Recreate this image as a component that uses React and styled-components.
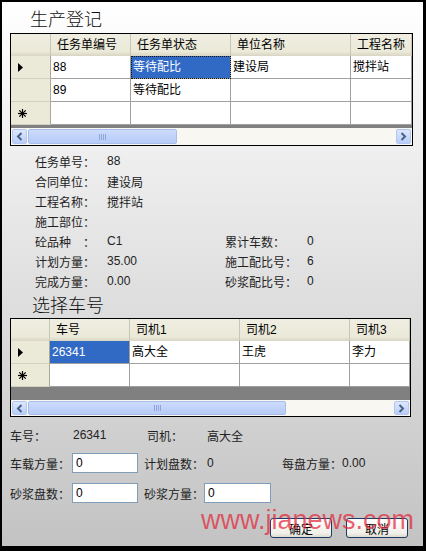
import styled, { createGlobalStyle } from "styled-components";

const Global = createGlobalStyle`
  body {
    margin: 0;
    font-family: "Liberation Sans", "Noto Sans CJK SC", sans-serif;
    font-size: 12px;
    color: #111;
  }
`;

const Window = styled.div`
  position: relative;
  width: 426px;
  height: 551px;
  box-sizing: border-box;
  border-style: solid;
  border-color: #000;
  border-width: 2px 3px 5px 2px;
  background: linear-gradient(#ffffff, #c3c3c3);
  padding: 0 10px 0 8px;
  display: flex;
  flex-direction: column;
  overflow: hidden;
`;

const Title = styled.div`
  font-family: "Noto Sans CJK SC", sans-serif;
  font-size: 18px;
  font-weight: 300;
  line-height: 24px;
  padding-left: ${(p) => p.$indent}px;
  margin-top: ${(p) => p.$mt}px;
  color: #111;
`;

const GridFrame = styled.div`
  width: ${(p) => p.$w}px;
  box-sizing: border-box;
  border: 1px solid #000;
  background: #808080;
  margin-top: ${(p) => p.$mt}px;
  overflow: hidden;
`;

const GridRow = styled.div`
  display: grid;
  grid-template-columns: ${(p) => p.$cols};
`;

const HeadCell = styled.div`
  height: 22px;
  box-sizing: border-box;
  background: linear-gradient(#efeee2 0%, #ebe9d8 80%, #d8d5c4 100%);
  border-right: 1px solid #c9c6b5;
  padding-left: 6px;
  line-height: 22px;
  white-space: nowrap;
  overflow: hidden;
  color: #000;
`;

const RowHead = styled.div`
  height: 23px;
  box-sizing: border-box;
  background: #ebe9d8;
  border-right: 1px solid #aca899;
  border-bottom: 1px solid #d4d0c0;
  display: flex;
  align-items: center;
  padding-left: 7px;
`;

const Cell = styled.div`
  height: 23px;
  box-sizing: border-box;
  background: ${(p) => (p.$sel ? "#316ac5" : "#fff")};
  color: ${(p) => (p.$sel ? "#fff" : "#000")};
  border-right: 1px solid #a0a0a0;
  border-bottom: 1px solid #a0a0a0;
  padding-left: 2px;
  line-height: 22px;
  white-space: nowrap;
  overflow: hidden;
  outline: ${(p) => (p.$focus ? "1px dotted #111" : "none")};
  outline-offset: -1px;
`;

const Band = styled.div`
  height: ${(p) => p.$h}px;
  background: #808080;
`;

const ScrollBar = styled.div`
  height: ${(p) => p.$h}px;
  background: #f8f7f2;
  display: flex;
  align-items: center;
  padding: 0 1px;
  box-sizing: border-box;
`;

const ArrowBtn = styled.div`
  width: 15px;
  height: ${(p) => p.$h - 2}px;
  box-sizing: border-box;
  border: 1px solid #b2c6f2;
  border-radius: 2px;
  background: linear-gradient(#dde7fe, #b9cdf9);
  display: flex;
  align-items: center;
  justify-content: center;
  margin-left: ${(p) => (p.$right ? "auto" : "0")};
`;

const Thumb = styled.div`
  margin-left: ${(p) => p.$ml}px;
  width: ${(p) => p.$w}px;
  height: ${(p) => p.$h - 2}px;
  box-sizing: border-box;
  border: 1px solid #a7bdea;
  border-radius: 2px;
  background: linear-gradient(#cddbfc, #b6cbf7);
  display: flex;
  align-items: center;
  justify-content: center;
  gap: 1px;
`;

const Grip = styled.span`
  width: 1px;
  height: 6px;
  background: #8ea7da;
`;

const Chevron = ({ right }) => (
  <svg width="7" height="9" viewBox="0 0 7 9">
    <path
      d={right ? "M1.5 1 L5 4.5 L1.5 8" : "M5.5 1 L2 4.5 L5.5 8"}
      fill="none"
      stroke="#4d6185"
      strokeWidth="2"
    />
  </svg>
);

const CurrentMark = () => (
  <svg width="5" height="9" viewBox="0 0 5 9">
    <path d="M0 0 L5 4.5 L0 9 Z" fill="#000" />
  </svg>
);

const NewMark = () => (
  <svg width="9" height="9" viewBox="0 0 9 9" stroke="#000" strokeWidth="1.2">
    <line x1="0" y1="4.5" x2="9" y2="4.5" />
    <line x1="4.5" y1="0" x2="4.5" y2="9" />
    <line x1="1.3" y1="1.3" x2="7.7" y2="7.7" />
    <line x1="7.7" y1="1.3" x2="1.3" y2="7.7" />
  </svg>
);

const DataGrid = ({ w, mt, cols, headers, rows, sel, focus, band, bar, thumb }) => (
  <GridFrame $w={w} $mt={mt}>
    <GridRow $cols={cols}>
      <HeadCell />
      {headers.map((h) => (
        <HeadCell key={h}>{h}</HeadCell>
      ))}
    </GridRow>
    {rows.map((r, i) => (
      <GridRow $cols={cols} key={i}>
        <RowHead>{i === 0 ? <CurrentMark /> : i === rows.length - 1 ? <NewMark /> : null}</RowHead>
        {r.map((c, j) => (
          <Cell key={j} $sel={i === 0 && j === sel} $focus={i === 0 && j === sel && focus}>
            {c}
          </Cell>
        ))}
      </GridRow>
    ))}
    <Band $h={band} />
    <ScrollBar $h={bar}>
      <ArrowBtn $h={bar}>
        <Chevron />
      </ArrowBtn>
      <Thumb $ml={thumb[0]} $w={thumb[1]} $h={bar}>
        <Grip />
        <Grip />
        <Grip />
        <Grip />
      </Thumb>
      <ArrowBtn $h={bar} $right>
        <Chevron right />
      </ArrowBtn>
    </ScrollBar>
  </GridFrame>
);

const Info = styled.div`
  display: grid;
  grid-template-columns: 72px 118px 82px 1fr;
  grid-auto-rows: 20px;
  align-items: center;
  padding-left: 25px;
  margin-top: 5px;
  color: #222;
`;

const Text = styled.span`
  white-space: pre;
  padding-left: ${(p) => p.$pl || 0}px;
`;

const FormRow = styled.div`
  display: grid;
  grid-template-columns: 62px 72px 60px 78px 60px 1fr;
  height: 20px;
  align-items: center;
  margin-top: ${(p) => p.$mt}px;
  color: #222;
`;

const Input = styled.div`
  width: ${(p) => p.$w}px;
  height: 20px;
  box-sizing: border-box;
  border: 1px solid #7f9db9;
  background: #fff;
  padding-left: 3px;
  line-height: 18px;
  color: #000;
`;

const Buttons = styled.div`
  display: flex;
  justify-content: flex-end;
  gap: 14px;
  margin-top: 15px;
  padding-right: 5px;
`;

const Button = styled.div`
  width: 62px;
  height: 20px;
  box-sizing: border-box;
  border: 1px solid #1c3a64;
  border-radius: 3px;
  background: linear-gradient(#ffffff, #f0efe8 80%, #dcdad0);
  display: flex;
  align-items: center;
  justify-content: center;
  color: #000;
`;

const Watermark = styled.div`
  position: absolute;
  left: 199px;
  top: 505px;
  font-family: "Liberation Sans", sans-serif;
  font-size: 27px;
  line-height: 1;
  color: rgba(226, 40, 58, 0.72);
  white-space: nowrap;
  pointer-events: none;
`;

const info = [
  ["任务单号：", "88"],
  ["合同单位：", "建设局"],
  ["工程名称：", "搅拌站"],
  ["施工部位：", ""],
  ["砼品种　：", "C1", "累计车数：", "0"],
  ["计划方量：", "35.00", "施工配比号：", "6"],
  ["完成方量：", "0.00", "砂浆配比号：", "0"],
];

export default function App() {
  return (
    <>
      <Global />
      <Window>
        <Title $indent={20} $mt={4}>生产登记</Title>
        <DataGrid
          w={403}
          mt={3}
          cols="40px 80px 100px 120px 61px"
          headers={["任务单编号", "任务单状态", "单位名称", "工程名称"]}
          rows={[
            ["88", "等待配比", "建设局", "搅拌站"],
            ["89", "等待配比", "", ""],
            ["", "", "", ""],
          ]}
          sel={1}
          focus
          band={3}
          bar={17}
          thumb={[1, 149]}
        />
        <Info>
          {info.flatMap((r, i) => [
            <Text key={"a" + i}>{r[0]}</Text>,
            <Text key={"b" + i}>{r[1]}</Text>,
            <Text key={"c" + i}>{r[2] || ""}</Text>,
            <Text key={"d" + i}>{r[3] || ""}</Text>,
          ])}
        </Info>
        <Title $indent={22} $mt={1}>选择车号</Title>
        <DataGrid
          w={401}
          mt={2}
          cols="39px 80px 110px 110px 60px"
          headers={["车号", "司机1", "司机2", "司机3"]}
          rows={[
            ["26341", "高大全", "王虎", "李力"],
            ["", "", "", ""],
          ]}
          sel={0}
          band={13}
          bar={16}
          thumb={[1, 258]}
        />
        <FormRow $mt={8}>
          <Text>车号：</Text>
          <Text $pl={1}>26341</Text>
          <Text $pl={3}>司机：</Text>
          <Text $pl={3}>高大全</Text>
        </FormRow>
        <FormRow $mt={8}>
          <Text>车载方量：</Text>
          <Input $w={66}>0</Input>
          <Text>计划盘数：</Text>
          <Text $pl={3}>0</Text>
          <Text>每盘方量：</Text>
          <Text>0.00</Text>
        </FormRow>
        <FormRow $mt={10}>
          <Text>砂浆盘数：</Text>
          <Input $w={66}>0</Input>
          <Text>砂浆方量：</Text>
          <Input $w={67}>0</Input>
        </FormRow>
        <Buttons>
          <Button>确定</Button>
          <Button>取消</Button>
        </Buttons>
        <Watermark>www.jianews.com</Watermark>
      </Window>
    </>
  );
}
